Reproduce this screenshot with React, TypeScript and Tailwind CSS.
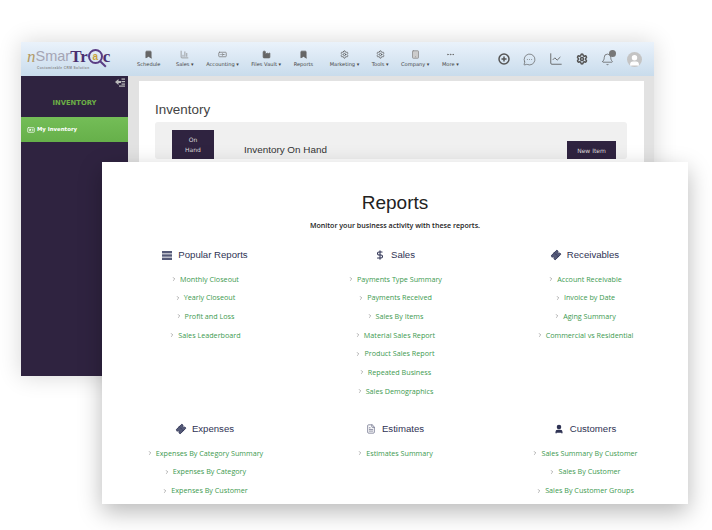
import React from 'react';
import { Bookmark, ChartColumn, Banknote, Factory, Settings, Tablet, Ellipsis, CirclePlus, MessageCircleMore, ChartLine, Bell, User, DollarSign, Ticket, FileText, ChevronRight, IdCard } from 'lucide-react';

const navItems = [
  { label: 'Schedule', icon: Bookmark, extra: '', fill: 'fill-[#666] text-[#666]', caret: false },
  { label: 'Sales', icon: ChartColumn, extra: 'ml-[3px]', fill: 'text-[#888]', caret: true },
  { label: 'Accounting', icon: Banknote, extra: '', fill: 'text-[#777]', caret: true },
  { label: 'Files Vault', icon: Factory, extra: '', fill: 'fill-[#666] text-[#666]', caret: true },
  { label: 'Reports', icon: Bookmark, extra: '', fill: 'fill-[#666] text-[#666]', caret: false },
  { label: 'Marketing', icon: Settings, extra: 'ml-[4px]', fill: 'text-[#555]', caret: true },
  { label: 'Tools', icon: Settings, extra: '', fill: 'text-[#555]', caret: true },
  { label: 'Company', icon: Tablet, extra: '', fill: 'fill-[#ccc] text-[#888]', caret: true },
  { label: 'More', icon: Ellipsis, extra: '', fill: 'text-[#666]', caret: true },
];

const StackIcon = () => (
  <svg width="10" height="9" viewBox="0 0 10 9" className="fill-[#555a78]">
    <rect x="0" y="0" width="10" height="2.4" />
    <rect x="0" y="3.3" width="10" height="2.4" />
    <rect x="0" y="6.6" width="10" height="2.4" />
  </svg>
);

const sections = [
  { title: 'Popular Reports', icon: <StackIcon />, links: ['Monthly Closeout', 'Yearly Closeout', 'Profit and Loss', 'Sales Leaderboard'] },
  { title: 'Sales', icon: <DollarSign size={10} strokeWidth={2.5} className="text-[#2f3354]" />, links: ['Payments Type Summary', 'Payments Received', 'Sales By Items', 'Material Sales Report', 'Product Sales Report', 'Repeated Business', 'Sales Demographics'] },
  { title: 'Receivables', icon: <Ticket size={10} strokeWidth={2} className="-rotate-45 fill-[#555a78] text-[#2f3354]" />, links: ['Account Receivable', 'Invoice by Date', 'Aging Summary', 'Commercial vs Residential'] },
  { title: 'Expenses', icon: <Ticket size={10} strokeWidth={2} className="-rotate-45 fill-[#555a78] text-[#2f3354]" />, links: ['Expenses By Category Summary', 'Expenses By Category', 'Expenses By Customer'] },
  { title: 'Estimates', icon: <FileText size={10} strokeWidth={1.8} className="text-[#666a85]" />, links: ['Estimates Summary'] },
  { title: 'Customers', icon: <User size={10} strokeWidth={3} className="fill-[#2f3354] text-[#2f3354]" />, links: ['Sales Summary By Customer', 'Sales By Customer', 'Sales By Customer Groups'] },
];

const Logo = () => (
  <div className="relative h-[30px] w-[110px] shrink-0 pt-[3px]">
    <div className="flex items-center font-['Liberation_Sans',sans-serif] text-[14.5px] leading-[19px]">
      <span className="font-['Liberation_Serif',serif] text-[17px] italic text-[#b39a63]">n</span>
      <span className="text-[#a5a5b4]">Smar</span>
      <span className="font-['Liberation_Serif',serif] text-[17px] font-bold text-[#4a2f70]">Tr</span>
      <span className="relative flex h-[15px] w-[15px] shrink-0 items-center justify-center rounded-full border-2 border-[#5a3d85] text-[10px] font-bold leading-none text-[#c9a23c]">
        a
        <span className="absolute -bottom-[3px] left-[9px] h-[2px] w-[8px] rotate-45 bg-[#5a3d85]" />
      </span>
      <span className="font-['Liberation_Serif',serif] text-[17px] font-bold text-[#4a2f70]">c</span>
    </div>
    <div className="pl-[10px] font-['Liberation_Sans',sans-serif] text-[3.2px] font-bold leading-[4px] tracking-[0.4px] text-[#888]">Customizable CRM Solution</div>
  </div>
);

const TopBar = () => (
  <div className="flex h-[34px] items-center bg-gradient-to-b from-[#eaf2fb] to-[#c9dcec] pl-[6px] pr-[12px]">
    <Logo />
    <div className="flex items-center gap-[12.5px]">
      {navItems.map((n) => (
        <div key={n.label} className={`flex flex-col items-center gap-[3px] ${n.extra}`}>
          <n.icon size={9} className={n.fill} />
          <span className="whitespace-nowrap font-['DejaVu_Sans',sans-serif] text-[5.1px] leading-none text-[#444]">
            {n.label}{n.caret ? ' ▾' : ''}
          </span>
        </div>
      ))}
    </div>
    <div className="ml-auto flex items-center gap-[13px] text-[#555]">
      <CirclePlus size={12} strokeWidth={3} />
      <MessageCircleMore size={13} strokeWidth={1.2} />
      <ChartLine size={14} strokeWidth={1.4} />
      <Settings size={12} strokeWidth={3} />
      <div className="relative">
        <Bell size={13} strokeWidth={1.3} />
        <span className="absolute -right-[2px] -top-[3px] h-[7px] w-[7px] rounded-full bg-[#777]" />
      </div>
      <div className="flex h-[15px] w-[15px] items-end justify-center overflow-hidden rounded-full bg-[#c4c4c4]">
        <User size={13} className="fill-white text-white" />
      </div>
    </div>
  </div>
);

const Sidebar = () => (
  <div className="w-[107px] shrink-0 bg-[#2f2340]">
    <div className="flex h-[11px] justify-end pr-[3px] pt-[2px]">
      <svg width="10" height="9" viewBox="0 0 10 9" className="fill-[#bbb]">
        <path d="M0 4 L3.5 1 V3 H6 V5 H3.5 V7 Z" />
        <rect x="6.5" y="0.5" width="3.5" height="1.2" />
        <rect x="6.5" y="3" width="3.5" height="1.2" />
        <rect x="6.5" y="5.5" width="3.5" height="1.2" />
        <rect x="4" y="7.5" width="6" height="1.2" />
      </svg>
    </div>
    <div className="mt-[12px] text-center font-['DejaVu_Sans',sans-serif] text-[6.8px] font-bold leading-[8px] text-[#6cae46]">INVENTORY</div>
    <div className="mt-[10px] flex h-[25px] items-center gap-[2px] bg-gradient-to-b from-[#74bd57] to-[#66b04a] pl-[6px] font-['DejaVu_Sans',sans-serif] text-[5.4px] font-bold text-white">
      <IdCard size={8} className="text-white" />
      My Inventory
    </div>
  </div>
);

const Section = ({ s }: { s: (typeof sections)[number] }) => (
  <div className="flex flex-col items-center">
    <div className="flex h-[12px] items-center gap-[6px] font-['Liberation_Sans',sans-serif] text-[9.6px] text-[#2f3354]">
      {s.icon}
      {s.title}
    </div>
    <div className="mt-[13px] flex flex-col items-center gap-[8.7px]">
      {s.links.map((l) => (
        <div key={l} className="flex h-[10px] items-center gap-[3px] whitespace-nowrap font-['Open_Sans',sans-serif] text-[7.2px] text-[#3d9a50]">
          <ChevronRight size={6} className="text-[#666]" />
          {l}
        </div>
      ))}
    </div>
  </div>
);

export default function App() {
  return (
    <div className="relative h-[530px] w-[712px] overflow-hidden bg-white">
      <div className="ml-[21px] mt-[42px] flex h-[334px] w-[633px] flex-col bg-[#e2e2e2] shadow-[0_0_22px_rgba(0,0,0,0.16)]">
        <TopBar />
        <div className="flex min-h-0 flex-1">
          <Sidebar />
          <div className="ml-[11px] mt-[5px] h-full w-[505px] bg-white px-[16px] pt-[22px]">
            <div className="font-['Liberation_Sans',sans-serif] text-[13.4px] leading-none text-[#444]">Inventory</div>
            <div className="mt-[6px] flex w-[472px] items-start justify-between rounded-[3px] bg-[#f0f0f0] pl-[17px] pr-[11px] pt-[8px]">
              <div className="flex items-center">
                <div className="flex h-[29px] w-[42px] flex-col items-center justify-center gap-[4px] bg-[#2f2340] font-['DejaVu_Sans',sans-serif] text-[6px] leading-none text-[#ddd]">
                  <span>On</span>
                  <span>Hand</span>
                </div>
                <span className="ml-[30px] mt-[11px] font-['Liberation_Sans',sans-serif] text-[9.9px] text-[#333]">Inventory On Hand</span>
              </div>
              <div className="mt-[11px] flex h-[18px] w-[49px] items-center justify-center bg-[#2f2340] font-['DejaVu_Sans',sans-serif] text-[6px] text-[#ddd]">New Item</div>
            </div>
          </div>
        </div>
      </div>

      <div className="absolute left-[102px] top-[162px] h-[342px] w-[586px] overflow-hidden bg-white px-[8px] pt-[29px] shadow-[0_8px_22px_rgba(0,0,0,0.28)]">
        <h1 className="text-center font-['Liberation_Sans',sans-serif] text-[19px] leading-[24px] text-[#222]">Reports</h1>
        <p className="mt-[5px] text-center font-['Open_Sans',sans-serif] text-[7.1px] font-semibold leading-[10px] text-[#222]">Monitor your business activity with these reports.</p>
        <div className="mt-[19px] grid grid-cols-3 gap-y-[27px]">
          {sections.map((s) => (
            <Section key={s.title} s={s} />
          ))}
        </div>
      </div>
    </div>
  );
}
